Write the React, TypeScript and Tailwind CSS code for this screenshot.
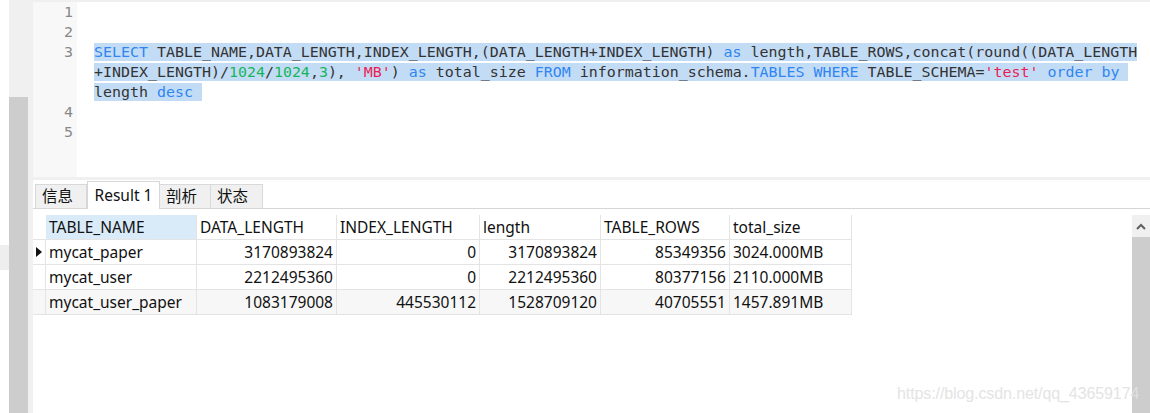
type Kind = "t" | "k" | "n" | "s";
type Tok = [string, Kind];

const tone: Record<Kind, string> = {
  t: "text-[#333333]",
  k: "text-[#2f86f2]",
  n: "text-[#16b55b]",
  s: "text-[#ea1e55]",
};

// line 3 of the query, wrapped the same way the editor wraps it
const wrapped: Tok[][] = [
  [
    ["SELECT", "k"],
    [" TABLE_NAME,DATA_LENGTH,INDEX_LENGTH,(DATA_LENGTH+INDEX_LENGTH) ", "t"],
    ["as", "k"],
    [" length,TABLE_ROWS,concat(round((DATA_LENGTH", "t"],
  ],
  [
    ["+INDEX_LENGTH)/", "t"],
    ["1024", "n"],
    ["/", "t"],
    ["1024", "n"],
    [",", "t"],
    ["3", "n"],
    ["), ", "t"],
    ["'MB'", "s"],
    [") ", "t"],
    ["as", "k"],
    [" total_size ", "t"],
    ["FROM", "k"],
    [" information_schema.", "t"],
    ["TABLES", "k"],
    [" ", "t"],
    ["WHERE", "k"],
    [" TABLE_SCHEMA=", "t"],
    ["'test'", "s"],
    [" ", "t"],
    ["order by ", "k"],
  ],
  [
    ["length ", "t"],
    ["desc ", "k"],
  ],
];

const gutter = ["1", "2", "3", "", "", "4", "5"];

const columns = [
  { name: "TABLE_NAME", w: "w-[151px]", right: false },
  { name: "DATA_LENGTH", w: "w-[140px]", right: true },
  { name: "INDEX_LENGTH", w: "w-[143px]", right: true },
  { name: "length", w: "w-[121px]", right: true },
  { name: "TABLE_ROWS", w: "w-[129px]", right: true },
  { name: "total_size", w: "w-[122px]", right: false },
];

const rows = [
  ["mycat_paper", "3170893824", "0", "3170893824", "85349356", "3024.000MB"],
  ["mycat_user", "2212495360", "0", "2212495360", "80377156", "2110.000MB"],
  ["mycat_user_paper", "1083179008", "445530112", "1528709120", "40705551", "1457.891MB"],
];

const tabs = [
  { label: "信息", w: "w-[52px]", active: false },
  { label: "Result 1", w: "w-[73px]", active: true },
  { label: "剖析", w: "w-[52px]", active: false },
  { label: "状态", w: "w-[53px]", active: false },
];

const mono = "font-['DejaVu_Sans_Mono',monospace] text-[14.95px] leading-[20px]";
const ui = "font-['Noto_Sans','Noto_Sans_CJK_SC',sans-serif] text-[15.5px]";

function Editor() {
  return (
    <div className={`flex h-[175px] bg-white ${mono}`}>
      <div className="w-[44px] bg-[#f8f8f8] pr-[4px] text-right text-[#888888]">
        {gutter.map((n, i) => (
          <div key={i} className="h-[20px]">
            {n}
          </div>
        ))}
      </div>
      <div className="flex-1 pl-[17px] pt-[40px] whitespace-pre">
        {wrapped.map((line, i) => (
          <div key={i} className="h-[20px]">
            <span className="bg-[#c3dcf5]">
              {line.map(([text, kind], j) => (
                <span key={j} className={tone[kind]}>
                  {text}
                </span>
              ))}
            </span>
          </div>
        ))}
      </div>
    </div>
  );
}

function Tabs() {
  return (
    <div className={`flex h-[29px] items-end border-b border-[#d6d6d6] bg-white pl-[2px] ${ui}`}>
      {tabs.map((t) =>
        t.active ? (
          <div
            key={t.label}
            className={`${t.w} relative z-10 -mb-px flex h-[28px] items-center justify-center border-x border-t border-[#d6d6d6] bg-white text-[#111]`}
          >
            {t.label}
          </div>
        ) : (
          <div
            key={t.label}
            className={`${t.w} -ml-px flex h-[24px] items-center border border-b-0 border-[#d9d9d9] bg-[#f0f0f0] pl-[6px] text-[#111] first:ml-0`}
          >
            {t.label}
          </div>
        ),
      )}
    </div>
  );
}

function Grid() {
  return (
    <div className={`w-fit text-[#111] ${ui}`}>
      <div className="flex h-[25px]">
        <div className="w-[13px] border-b border-[#e4e4e4]" />
        {columns.map((c, i) => (
          <div
            key={c.name}
            className={`${c.w} flex items-center border-b border-r border-[#e4e4e4] pl-[3px] pt-[1px] ${
              i === 0 ? "bg-[#d9eaf8]" : "bg-white"
            }`}
          >
            {c.name}
          </div>
        ))}
      </div>
      {rows.map((r, ri) => (
        <div key={ri} className={`flex h-[25px] ${ri === 2 ? "bg-[#f7f7f7]" : "bg-white"}`}>
          <div className="flex w-[13px] items-center justify-center border-b border-r border-[#e4e4e4]">
            {ri === 0 && (
              <svg width="6" height="10" viewBox="0 0 6 10">
                <polygon points="0,0 6,5 0,10" fill="#111" />
              </svg>
            )}
          </div>
          {r.map((v, ci) => (
            <div
              key={ci}
              className={`${columns[ci].w} flex items-center border-b border-r border-[#e4e4e4] px-[3px] pt-[1px] ${
                columns[ci].right ? "justify-end" : "justify-start"
              }`}
            >
              {v}
            </div>
          ))}
        </div>
      ))}
    </div>
  );
}

export default function App() {
  return (
    <div className="relative flex h-[413px] w-[1150px] overflow-hidden bg-white">
      <div className="w-[9px]">
        <div className="mt-[245px] h-[25px] bg-[#eeeeee]" />
      </div>
      <div className="flex w-[19px] flex-col">
        <div className="h-[97px] bg-[#f0f0f0]" />
        <div className="flex-1 bg-[#cdcdcd]" />
      </div>
      <div className="flex flex-1 flex-col bg-[#f0f0f0] pl-[5px] pt-[2px]">
        <Editor />
        <div className="h-[3px]" />
        <Tabs />
        <div className="flex flex-1 bg-white pt-[6px]">
          <div className="flex-1">
            <Grid />
          </div>
          <div className="flex w-[18px] flex-col">
            <div className="flex h-[22px] items-center justify-center bg-[#f0f0f0]">
              <svg width="10" height="7" viewBox="0 0 10 7">
                <path d="M1 6 L5 2 L9 6" stroke="#606060" strokeWidth="2" fill="none" />
              </svg>
            </div>
            <div className="flex-1 bg-[#cdcdcd]" />
          </div>
        </div>
      </div>
      <div className="pointer-events-none absolute left-[897px] top-[382px] font-['Liberation_Sans',sans-serif] text-[16px] tracking-[-0.1px] text-[#e2e2e2] opacity-90">
        https://blog.csdn.net/qq_43659174
      </div>
    </div>
  );
}
